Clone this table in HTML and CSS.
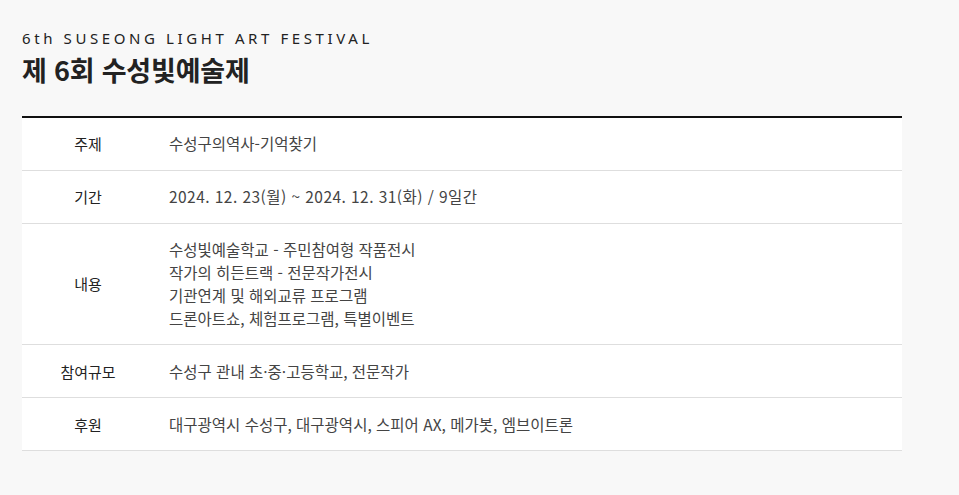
FILE: index.html
```html
<!DOCTYPE html>
<html lang="ko">
<head>
<meta charset="utf-8">
<title>제 6회 수성빛예술제</title>
<link rel="stylesheet" href="styles.css">
</head>
<body>
<div class="page">
  <header class="head">
    <p class="eyebrow">6th SUSEONG LIGHT ART FESTIVAL</p>
    <h1 class="title">제 6회 수성빛예술제</h1>
  </header>
  <div class="info">
    <div class="row">
      <div class="label">주제</div>
      <div class="value">수성구의역사-기억찾기</div>
    </div>
    <div class="row">
      <div class="label">기간</div>
      <div class="value date">2024. 12. 23(월) ~ 2024. 12. 31(화) / 9일간</div>
    </div>
    <div class="row">
      <div class="label">내용</div>
      <div class="value">수성빛예술학교 - 주민참여형 작품전시<br>작가의 히든트랙 - 전문작가전시<br>기관연계 및 해외교류 프로그램<br>드론아트쇼, 체험프로그램, 특별이벤트</div>
    </div>
    <div class="row">
      <div class="label">참여규모</div>
      <div class="value">수성구 관내 초·중·고등학교, 전문작가</div>
    </div>
    <div class="row">
      <div class="label">후원</div>
      <div class="value">대구광역시 수성구, 대구광역시, 스피어 AX, 메가봇, 엠브이트론</div>
    </div>
  </div>
</div>
</body>
</html>
```
FILE: styles.css
```css
html, body {
  margin: 0;
  padding: 0;
  background: #f8f8f8;
}
body {
  font-family: "Noto Sans CJK KR", "Noto Sans", sans-serif;
  color: #333;
}
.page {
  padding: 28px 0 0 22px;
  width: 880px;
}
.head {
  margin-bottom: 28px;
}
.eyebrow {
  margin: 0;
  font-family: "Noto Sans", "Noto Sans CJK KR", sans-serif;
  font-size: 15px;
  line-height: 20px;
  letter-spacing: 3.6px;
  color: #222;
}
.title {
  margin: 4px 0 0;
  font-size: 27px;
  line-height: 36px;
  font-weight: 700;
  color: #222;
  letter-spacing: -0.2px;
}
.info {
  border-top: 2px solid #111;
  background: #fff;
}
.row {
  display: grid;
  grid-template-columns: 132px 1fr;
  border-bottom: 1px solid #dedede;
  padding: 14.4px 0;
  align-items: center;
}
.label {
  text-align: center;
  font-size: 15px;
  line-height: 23px;
  color: #222;
}
.value {
  padding-left: 15px;
  font-size: 15.5px;
  line-height: 23px;
  color: #444;
}
.date {
  letter-spacing: 0.45px;
}
```
